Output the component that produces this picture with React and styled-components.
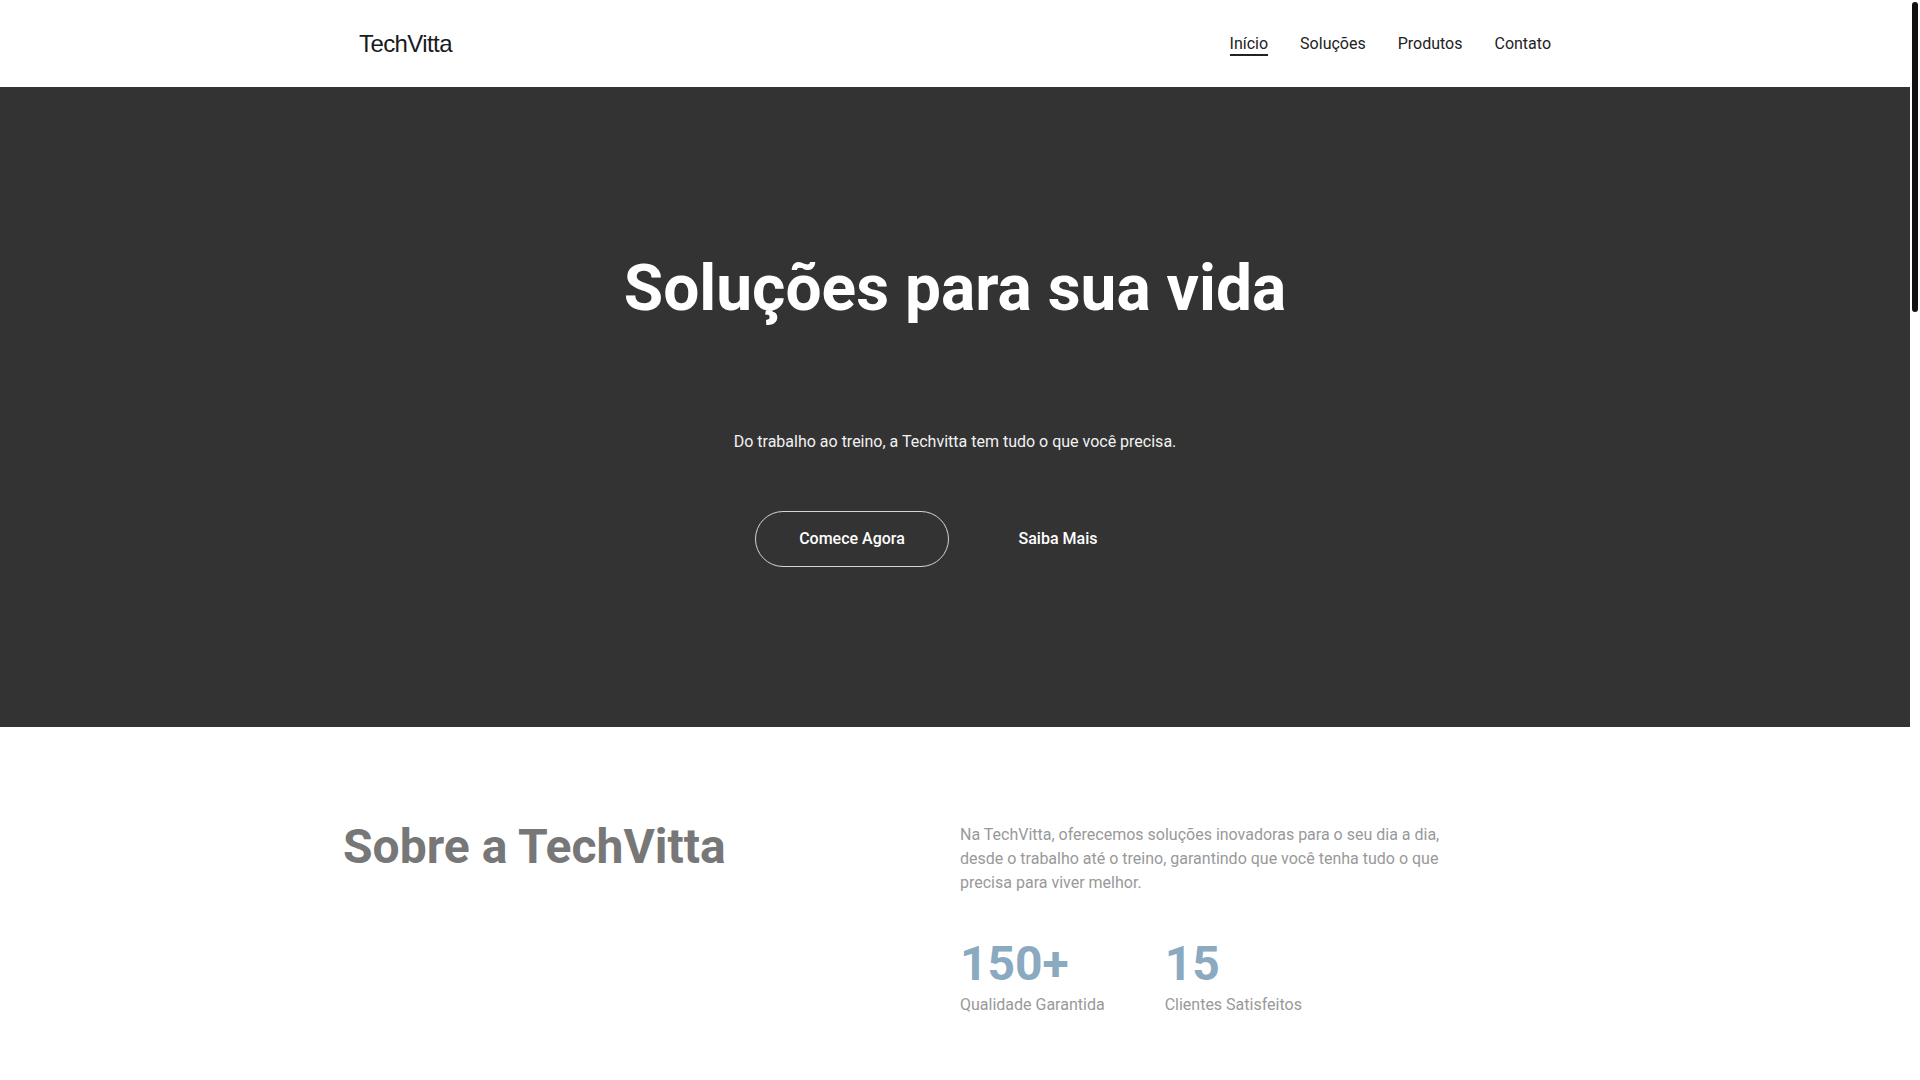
import React from "react";
import styled, { createGlobalStyle } from "styled-components";

const GlobalStyle = createGlobalStyle`
  *, *::before, *::after { box-sizing: border-box; }
  html, body { margin: 0; padding: 0; }
  body {
    font-family: Roboto, "Noto Sans", Arial, sans-serif;
    background: #fff;
    color: #222;
    -webkit-font-smoothing: antialiased;
  }
`;

const Page = styled.div`
  margin-right: 10px;
`;

const ScrollTrack = styled.div`
  position: fixed;
  top: 0;
  right: 0;
  width: 10px;
  height: 100vh;
  background: #fff;
  z-index: 10;
`;

const ScrollThumb = styled.div`
  position: absolute;
  top: 2px;
  left: 2px;
  width: 6px;
  height: 310px;
  border-radius: 3px;
  background: #111;
`;

const Header = styled.header`
  height: 87px;
  background: #fff;
`;

const HeaderInner = styled.div`
  max-width: 1200px;
  height: 100%;
  margin: 0 auto;
  padding: 0 4px;
  display: flex;
  align-items: center;
  justify-content: space-between;
`;

const Logo = styled.a`
  font-family: "Liberation Sans", Arial, sans-serif;
  font-size: 24px;
  letter-spacing: -0.6px;
  color: #161b22;
  text-decoration: none;
  line-height: 1;
`;

const Nav = styled.nav`
  display: flex;
  gap: 32px;
`;

const NavLink = styled.a`
  position: relative;
  font-size: 16px;
  line-height: 24px;
  color: #222;
  text-decoration: none;

  &::after {
    content: "";
    position: absolute;
    left: 0;
    right: 0;
    bottom: 0;
    height: 2px;
    background: #222;
    display: ${(p) => (p.$active ? "block" : "none")};
  }
`;

const Hero = styled.section`
  min-height: 640px;
  background: #333333;
  display: flex;
  flex-direction: column;
  align-items: center;
  justify-content: center;
  padding: 4px 20px 0;
  text-align: center;
`;

const HeroTitle = styled.h1`
  margin: 0;
  font-size: 64px;
  font-weight: 700;
  line-height: 1.2;
  color: #fff;
`;

const HeroText = styled.p`
  margin: 102px 0 0;
  font-size: 16px;
  line-height: 24px;
  color: #f2f2f2;
`;

const ButtonRow = styled.div`
  margin-top: 57px;
  display: flex;
  gap: 12px;
`;

const PillButton = styled.button`
  min-width: 194px;
  padding: 15px 43px;
  border-radius: 999px;
  border: 1px solid ${(p) => (p.$outlined ? "#d6d6d6" : "transparent")};
  background: transparent;
  color: #fff;
  font-family: Roboto, Arial, sans-serif;
  font-size: 16px;
  font-weight: 500;
  line-height: 24px;
  cursor: pointer;
`;

const About = styled.section`
  padding: 94px 0 56px;
  background: #fff;
`;

const AboutGrid = styled.div`
  max-width: 1224px;
  margin: 0 auto;
  display: grid;
  grid-template-columns: 1fr 1fr;
  gap: 10px;
`;

const AboutTitle = styled.h2`
  margin: 0;
  font-size: 48px;
  font-weight: 700;
  line-height: 1.1;
  color: #777;
`;

const AboutText = styled.p`
  margin: 2px 0 0;
  max-width: 490px;
  font-size: 16px;
  line-height: 24px;
  color: #999;
`;

const Stats = styled.div`
  display: flex;
  gap: 60px;
  margin-top: 45px;
`;

const Stat = styled.div`
  display: flex;
  flex-direction: column;
`;

const StatNumber = styled.span`
  font-size: 48px;
  font-weight: 700;
  line-height: 1;
  color: #8ba9bf;
`;

const StatLabel = styled.span`
  margin-top: 5px;
  font-size: 16px;
  line-height: 24px;
  color: #999;
`;

export default function App() {
  return (
    <>
      <GlobalStyle />
      <ScrollTrack aria-hidden="true">
        <ScrollThumb />
      </ScrollTrack>
      <Page>
        <Header>
          <HeaderInner>
            <Logo href="#">TechVitta</Logo>
            <Nav>
              <NavLink href="#" $active>Início</NavLink>
              <NavLink href="#">Soluções</NavLink>
              <NavLink href="#">Produtos</NavLink>
              <NavLink href="#">Contato</NavLink>
            </Nav>
          </HeaderInner>
        </Header>

        <Hero>
          <HeroTitle>Soluções para sua vida</HeroTitle>
          <HeroText>Do trabalho ao treino, a Techvitta tem tudo o que você precisa.</HeroText>
          <ButtonRow>
            <PillButton $outlined>Comece Agora</PillButton>
            <PillButton>Saiba Mais</PillButton>
          </ButtonRow>
        </Hero>

        <About>
          <AboutGrid>
            <AboutTitle>Sobre a TechVitta</AboutTitle>
            <div>
              <AboutText>
                Na TechVitta, oferecemos soluções inovadoras para o seu dia a dia, desde o trabalho até o
                treino, garantindo que você tenha tudo o que precisa para viver melhor.
              </AboutText>
              <Stats>
                <Stat>
                  <StatNumber>150+</StatNumber>
                  <StatLabel>Qualidade Garantida</StatLabel>
                </Stat>
                <Stat>
                  <StatNumber>15</StatNumber>
                  <StatLabel>Clientes Satisfeitos</StatLabel>
                </Stat>
              </Stats>
            </div>
          </AboutGrid>
        </About>
      </Page>
    </>
  );
}
